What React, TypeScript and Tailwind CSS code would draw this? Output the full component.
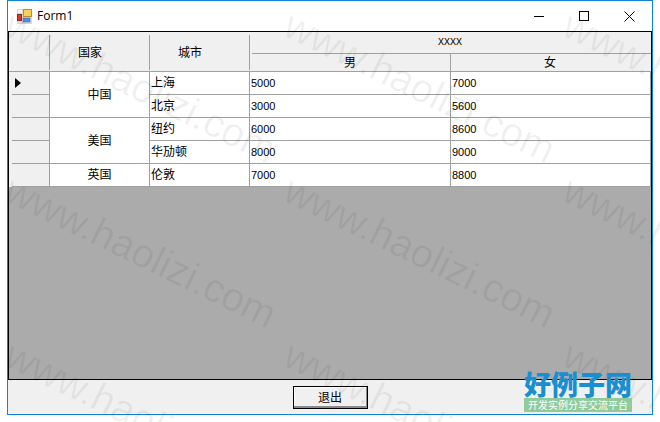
import React from "react";

const cjk = "font-['Liberation_Sans','Noto_Sans_CJK_SC',sans-serif]";
const gridLine = "border-[#a0a0a0]";

const rows = [
  { city: "上海", male: "5000", female: "7000" },
  { city: "北京", male: "3000", female: "5600" },
  { city: "纽约", male: "6000", female: "8600" },
  { city: "华劢顿", male: "8000", female: "9000" },
  { city: "伦敦", male: "7000", female: "8800" },
];

const countries = [
  { name: "中国", span: "row-span-2" },
  { name: "美国", span: "row-span-2" },
  { name: "英国", span: "row-span-1" },
];

const marks = [
  [17, 4], [296, 4], [575, 4],
  [17, 169], [296, 169], [575, 169],
  [17, 334], [296, 334], [575, 334],
];

const HeaderCell = ({ label }: { label: string }) => (
  <div className={`row-span-1 bg-[#f0f0f0] border-b ${gridLine} pt-[3px]`}>
    <div className={`h-[35px] flex items-center justify-center border-r ${gridLine} pr-[19px] text-[12px] text-black`}>{label}</div>
  </div>
);

const BodyCell = ({ text }: { text: string }) => (
  <div className={`bg-white border-b border-r ${gridLine} pl-[1px] flex items-center text-[11px] text-black`}>{text}</div>
);

export default function App() {
  return (
    <div className={`relative w-[660px] h-[422px] overflow-hidden bg-white pl-[7px] ${cjk}`}>
      <div className="w-[646px] h-[415px] flex flex-col border border-[#0f82dc] bg-[#f0f0f0]">
        {/* title bar */}
        <div className="h-[30px] shrink-0 bg-white flex items-center pl-[9px]">
          <svg width="15" height="15" viewBox="0 0 15 15" className="mt-[1px]">
            <rect x="0" y="0" width="15" height="15" fill="#d8d8d8" />
            <rect x="1" y="1" width="4" height="3" fill="#f4f4f4" />
            <rect x="6.5" y="0.5" width="8" height="7" fill="#f7d254" stroke="#b98f2a" />
            <rect x="0.5" y="5.5" width="4" height="6" fill="#e0352b" stroke="#8e2a24" />
            <rect x="6" y="9" width="7" height="4" fill="#4f8ee0" stroke="#3568ad" strokeWidth="0.5" />
          </svg>
          <span className="ml-[5px] text-[12px] text-black font-['Open_Sans',sans-serif]">Form1</span>
          <div className="ml-auto flex items-center pr-[17px] gap-[35px]">
            <div className="w-[10px] h-[1px] bg-black" />
            <div className="w-[10px] h-[10px] border border-black" />
            <svg width="11" height="11" viewBox="0 0 11 11">
              <path d="M0.5 0.5L10.5 10.5M10.5 0.5L0.5 10.5" stroke="#000" strokeWidth="1" />
            </svg>
          </div>
        </div>

        {/* data grid */}
        <div className="h-[349px] shrink-0 border border-black bg-[#ababab]">
          <div className="grid grid-cols-[41px_100px_100px_201px_200px] grid-rows-[40px_23px_23px_23px_23px_23px]">
            <HeaderCell label="" />
            <HeaderCell label="国家" />
            <HeaderCell label="城市" />
            <div className={`col-span-2 bg-[#f0f0f0] border-b ${gridLine} flex flex-col`}>
              <div className={`h-[22px] ml-[2px] border-b ${gridLine} flex items-center justify-center pr-[3px] text-[10px] text-black font-['Liberation_Mono',monospace]`}>
                XXXX
              </div>
              <div className="h-[16px] grid grid-cols-[201px_200px] text-[12px] text-black">
                <div className={`flex items-center justify-center border-r ${gridLine}`}>男</div>
                <div className="flex items-center justify-center pr-[2px]">女</div>
              </div>
            </div>

            <div className="col-start-1 row-start-2 row-span-5 grid grid-rows-subgrid">
              {rows.map((r, i) => (
                <div key={r.city} className={`relative bg-[#f0f0f0] border-r ${gridLine} pl-[3px]`}>
                  <div className={`h-full border-b ${gridLine}`} />
                  {i === 0 && (
                    <svg width="6" height="10" viewBox="0 0 6 10" className="absolute left-[6px] top-[6px]">
                      <path d="M0 0L6 5L0 10Z" fill="#000" />
                    </svg>
                  )}
                </div>
              ))}
            </div>
            <div className="col-start-2 row-start-2 row-span-5 grid grid-rows-subgrid">
              {countries.map((c) => (
                <div key={c.name} className={`${c.span} bg-white border-b border-r ${gridLine} flex items-center justify-center text-[12px] text-black`}>
                  {c.name}
                </div>
              ))}
            </div>
            <div className="col-start-3 col-span-3 row-start-2 row-span-5 grid grid-cols-subgrid grid-rows-subgrid">
              {rows.map((r) => (
                <React.Fragment key={r.city}>
                  <div className={`bg-white border-b border-r ${gridLine} pl-[1px] flex items-center text-[12px] text-black`}>{r.city}</div>
                  <BodyCell text={r.male} />
                  <BodyCell text={r.female} />
                </React.Fragment>
              ))}
            </div>
          </div>
        </div>

        {/* button strip */}
        <div className="flex-1 flex justify-center pt-[6px]">
          <button className="w-[75px] h-[23px] border border-black bg-[#f0f0f0] shadow-[inset_-1px_-2px_0_#8a8a8a,inset_1px_1px_0_#ffffff] text-[12px] text-black flex items-center justify-center">
            退出
          </button>
        </div>
      </div>

      {/* site watermark */}
      {marks.map(([x, y]) => (
        <div
          key={`${x}-${y}`}
          className="absolute origin-top-left rotate-[26deg] whitespace-nowrap text-[40px] leading-none text-black/[0.06] font-['Liberation_Sans',sans-serif] pointer-events-none"
          style={{ left: x, top: y }}
        >
          www.haolizi.com
        </div>
      ))}

      {/* site logo */}
      <div className="absolute left-[524px] top-[369px] w-[108px] flex flex-col items-center pointer-events-none">
        <div className="text-[27px] leading-[29px] font-black text-[#1a8fd0] font-['Noto_Sans_CJK_SC',sans-serif] whitespace-nowrap">好例子网</div>
        <div className="w-full h-[14px] bg-[#8fcb9b] text-[10px] leading-[14px] text-white text-center whitespace-nowrap font-['Noto_Sans_CJK_SC',sans-serif]">开发实例分享交流平台</div>
      </div>
    </div>
  );
}
